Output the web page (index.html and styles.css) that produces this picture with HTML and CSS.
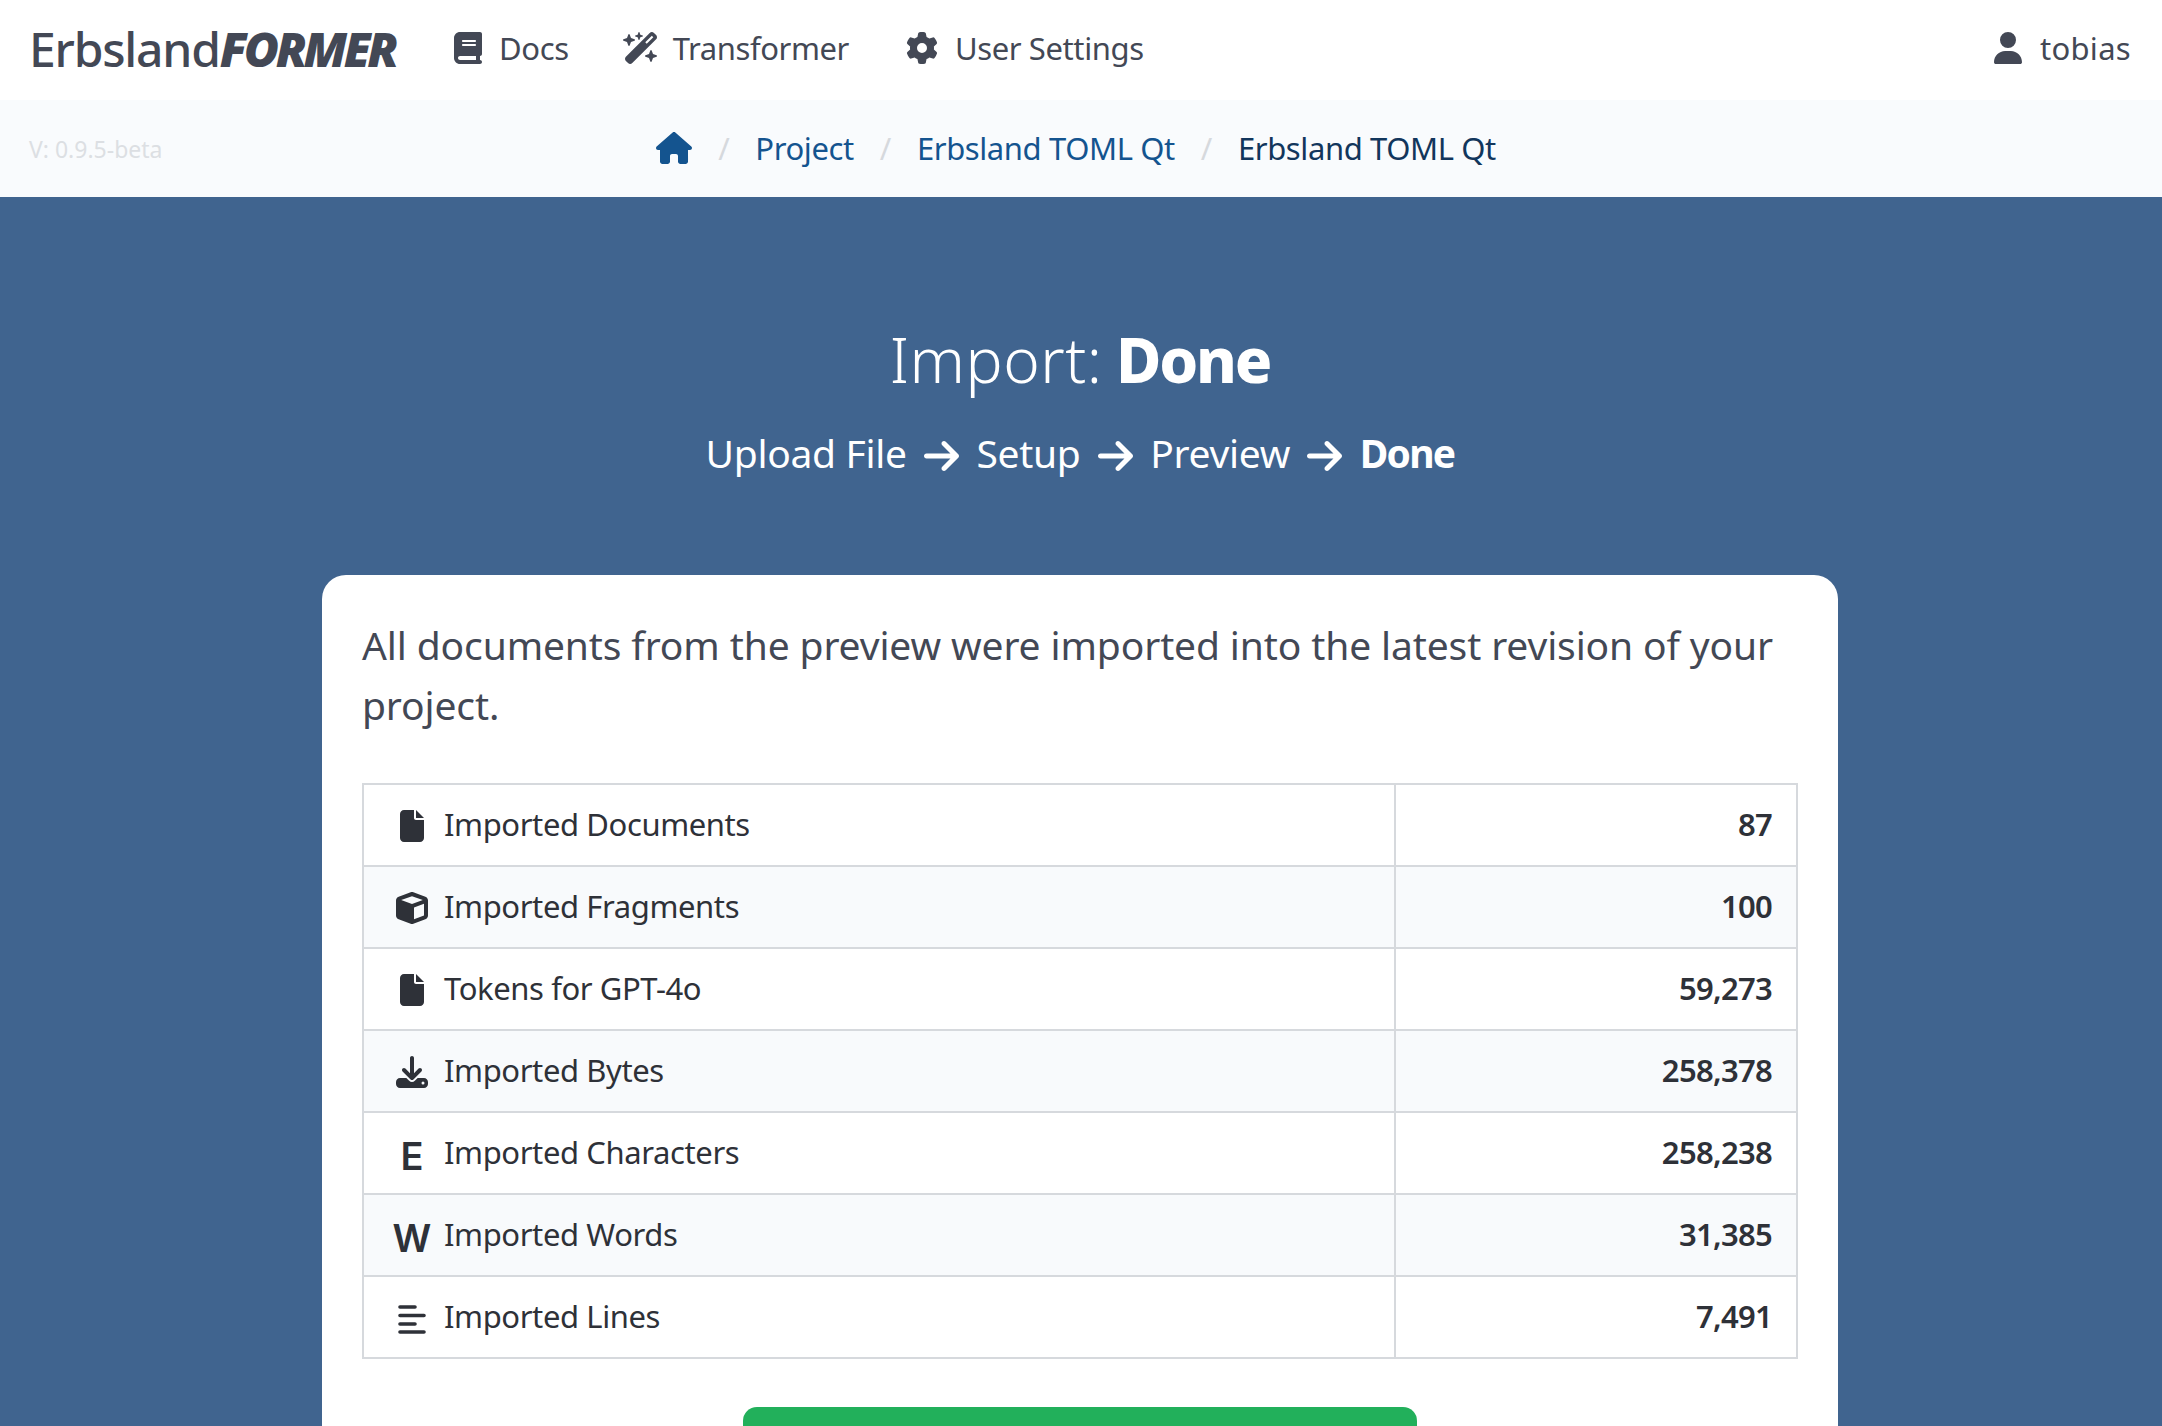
FILE: index.html
```html
<!DOCTYPE html>
<html lang="en">
<head>
  <meta charset="UTF-8" />
  <meta name="viewport" content="width=device-width, initial-scale=1.0" />
  <title>ErbslandFORMER</title>
  <link rel="stylesheet" href="styles.css">
</head>
<body>

  <header class="topbar">
    <a class="logo" href="#">Erbsland<b>FORMER</b></a>
    <nav class="topnav">
      <a href="#">
        <svg class="ico" viewBox="0 0 448 512"><path d="M96 0C43 0 0 43 0 96V416c0 53 43 96 96 96H384h32c17.7 0 32-14.3 32-32s-14.3-32-32-32V384c17.7 0 32-14.3 32-32V32c0-17.7-14.3-32-32-32H384 96zm0 384H352v64H96c-17.7 0-32-14.3-32-32s14.3-32 32-32zm32-240c0-8.8 7.2-16 16-16H336c8.8 0 16 7.2 16 16s-7.2 16-16 16H144c-8.8 0-16-7.2-16-16zm16 48H336c8.8 0 16 7.2 16 16s-7.2 16-16 16H144c-8.8 0-16-7.2-16-16s7.2-16 16-16z"/></svg>
        Docs
      </a>
      <a href="#" class="tf">
        <svg class="ico" viewBox="0 0 576 512"><path d="M234.7 42.7L197 56.8c-3 1.1-5 4-5 7.2s2 6.1 5 7.2l37.7 14.1L248.8 123c1.1 3 4 5 7.2 5s6.1-2 7.2-5l14.1-37.7L315 71.2c3-1.1 5-4 5-7.2s-2-6.1-5-7.2L277.3 42.7 263.2 5c-1.1-3-4-5-7.2-5s-6.1 2-7.2 5L234.7 42.7zM46.1 395.4c-18.7 18.7-18.7 49.1 0 67.9l34.6 34.6c18.7 18.7 49.1 18.7 67.9 0L529.9 116.5c18.7-18.7 18.7-49.1 0-67.9L495.3 14.1c-18.7-18.7-49.1-18.7-67.9 0L46.1 395.4zM484.6 82.6l-105 105-23.3-23.3 105-105 23.3 23.3zM7.5 117.2C3 118.9 0 123.2 0 128s3 9.1 7.5 10.8L64 160l21.2 56.5c1.7 4.5 6 7.5 10.8 7.5s9.1-3 10.8-7.5L128 160l56.5-21.2c4.5-1.7 7.5-6 7.5-10.8s-3-9.1-7.5-10.8L128 96 106.8 39.5C105.1 35 100.8 32 96 32s-9.1 3-10.8 7.5L64 96 7.5 117.2zm352 256c-4.5 1.7-7.5 6-7.5 10.8s3 9.1 7.5 10.8L416 416l21.2 56.5c1.7 4.5 6 7.5 10.8 7.5s9.1-3 10.8-7.5L480 416l56.5-21.2c4.5-1.7 7.5-6 7.5-10.8s-3-9.1-7.5-10.8L480 352l-21.2-56.5c-1.7-4.5-6-7.5-10.8-7.5s-9.1 3-10.8 7.5L416 352l-56.5 21.2z"/></svg>
        Transformer
      </a>
      <a href="#">
        <svg class="ico" viewBox="0 0 512 512"><path d="M495.9 166.6c3.2 8.7 .5 18.4-6.4 24.6l-43.3 39.4c1.1 8.3 1.7 16.8 1.7 25.4s-.6 17.1-1.7 25.4l43.3 39.4c6.9 6.2 9.6 15.9 6.4 24.6c-4.4 11.9-9.7 23.3-15.8 34.3l-4.7 8.1c-6.6 11-14 21.4-22.1 31.2c-5.9 7.2-15.7 9.6-24.5 6.8l-55.7-17.7c-13.4 10.3-28.2 18.9-44 25.4l-12.5 57.1c-2 9.1-9 16.3-18.2 17.8c-13.8 2.3-28 3.5-42.5 3.5s-28.7-1.2-42.5-3.5c-9.2-1.5-16.2-8.7-18.2-17.8l-12.5-57.1c-15.8-6.5-30.6-15.1-44-25.4L83.1 425.9c-8.8 2.8-18.6 .3-24.5-6.8c-8.1-9.8-15.5-20.2-22.1-31.2l-4.7-8.1c-6.1-11-11.4-22.4-15.8-34.3c-3.2-8.7-.5-18.4 6.4-24.6l43.3-39.4C64.6 273.1 64 264.6 64 256s.6-17.1 1.7-25.4L22.4 191.2c-6.9-6.2-9.6-15.9-6.4-24.6c4.4-11.9 9.7-23.3 15.8-34.3l4.7-8.1c6.6-11 14-21.4 22.1-31.2c5.9-7.2 15.7-9.6 24.5-6.8l55.7 17.7c13.4-10.3 28.2-18.9 44-25.4l12.5-57.1c2-9.1 9-16.3 18.2-17.8C227.3 1.2 241.5 0 256 0s28.7 1.2 42.5 3.5c9.2 1.5 16.2 8.7 18.2 17.8l12.5 57.1c15.8 6.5 30.6 15.1 44 25.4l55.7-17.7c8.8-2.8 18.6-.3 24.5 6.8c8.1 9.8 15.5 20.2 22.1 31.2l4.7 8.1c6.1 11 11.4 22.4 15.8 34.3zM256 336a80 80 0 1 0 0-160 80 80 0 1 0 0 160z"/></svg>
        User Settings
      </a>
    </nav>
    <a class="user" href="#">
      <svg class="ico" viewBox="0 0 448 512"><path d="M224 256A128 128 0 1 0 224 0a128 128 0 1 0 0 256zm-45.7 48C79.8 304 0 383.8 0 482.3C0 498.7 13.3 512 29.7 512H418.3c16.4 0 29.7-13.3 29.7-29.7C448 383.8 368.2 304 269.7 304H178.3z"/></svg>
      tobias
    </a>
  </header>

  <div class="crumbbar">
    <span class="version">V: 0.9.5-beta</span>
    <nav class="crumbs">
      <a href="#" class="home"><svg viewBox="0 0 576 512"><path d="M575.8 255.5c0 18-15 32.1-32 32.1h-32l.7 160.2c0 2.7-.2 5.4-.5 8.1V472c0 22.1-17.9 40-40 40H456c-1.1 0-2.2 0-3.3-.1c-1.4 .1-2.8 .1-4.2 .1H416 392c-22.1 0-40-17.9-40-40V448 384c0-17.7-14.3-32-32-32H256c-17.7 0-32 14.3-32 32v64 24c0 22.1-17.9 40-40 40H160 128.1c-1.5 0-3-.1-4.5-.2c-1.2 .1-2.4 .2-3.6 .2H104c-22.1 0-40-17.9-40-40V360c0-.9 0-1.9 .1-2.8V287.6H32c-18 0-32-14-32-32.1c0-9 3-17 10-24L266.4 8c7-7 15-8 22-8s15 2 21 7L564.8 231.5c8 7 12 15 11 24z"/></svg></a>
      <span class="sep">/</span>
      <a href="#">Project</a>
      <span class="sep">/</span>
      <a href="#">Erbsland TOML Qt</a>
      <span class="sep">/</span>
      <span class="current">Erbsland TOML Qt</span>
    </nav>
  </div>

  <main class="hero">
    <h1>Import: <b>Done</b></h1>
    <p class="steps">Upload File <svg class="arr" viewBox="0 0 448 512"><path d="M438.6 278.6c12.5-12.5 12.5-32.8 0-45.3l-160-160c-12.5-12.5-32.8-12.5-45.3 0s-12.5 32.8 0 45.3L338.8 224 32 224c-17.7 0-32 14.3-32 32s14.3 32 32 32l306.7 0L233.4 393.4c-12.5 12.5-12.5 32.8 0 45.3s32.8 12.5 45.3 0l160-160z"/></svg> Setup <svg class="arr" viewBox="0 0 448 512"><path d="M438.6 278.6c12.5-12.5 12.5-32.8 0-45.3l-160-160c-12.5-12.5-32.8-12.5-45.3 0s-12.5 32.8 0 45.3L338.8 224 32 224c-17.7 0-32 14.3-32 32s14.3 32 32 32l306.7 0L233.4 393.4c-12.5 12.5-12.5 32.8 0 45.3s32.8 12.5 45.3 0l160-160z"/></svg> Preview <svg class="arr" viewBox="0 0 448 512"><path d="M438.6 278.6c12.5-12.5 12.5-32.8 0-45.3l-160-160c-12.5-12.5-32.8-12.5-45.3 0s-12.5 32.8 0 45.3L338.8 224 32 224c-17.7 0-32 14.3-32 32s14.3 32 32 32l306.7 0L233.4 393.4c-12.5 12.5-12.5 32.8 0 45.3s32.8 12.5 45.3 0l160-160z"/></svg> <b>Done</b></p>

    <section class="card">
      <p class="lead">All documents from the preview were imported into the latest revision of your project.</p>

      <table class="stats">
        <tr>
          <td><span class="cell-ico"><svg viewBox="0 0 384 512"><path d="M0 64C0 28.7 28.7 0 64 0H224V128c0 17.7 14.3 32 32 32H384V448c0 35.3-28.7 64-64 64H64c-35.3 0-64-28.7-64-64V64zm384 64H256V0L384 128z"/></svg></span>Imported Documents</td>
          <td>87</td>
        </tr>
        <tr>
          <td><span class="cell-ico"><svg viewBox="0 0 512 512"><path d="M234.5 5.7c13.9-5 29.1-5 43.1 0l192 68.6C495 83.4 512 107.5 512 134.6V377.4c0 27-17 51.2-42.5 60.3l-192 68.6c-13.9 5-29.1 5-43.1 0l-192-68.6C17 428.6 0 404.5 0 377.4V134.6c0-27 17-51.2 42.5-60.3l192-68.6zM256 66L82.3 128 256 190l173.7-62L256 66zm32 368.6l160-57.1v-188L288 246.6v188z"/></svg></span>Imported Fragments</td>
          <td>100</td>
        </tr>
        <tr>
          <td><span class="cell-ico"><svg viewBox="0 0 384 512"><path d="M0 64C0 28.7 28.7 0 64 0H224V128c0 17.7 14.3 32 32 32H384V448c0 35.3-28.7 64-64 64H64c-35.3 0-64-28.7-64-64V64zm384 64H256V0L384 128z"/></svg></span>Tokens for GPT-4o</td>
          <td>59,273</td>
        </tr>
        <tr>
          <td><span class="cell-ico"><svg viewBox="0 0 512 512"><path d="M288 32c0-17.7-14.3-32-32-32s-32 14.3-32 32V274.7l-73.4-73.4c-12.5-12.5-32.8-12.5-45.3 0s-12.5 32.8 0 45.3l128 128c12.5 12.5 32.8 12.5 45.3 0l128-128c12.5-12.5 12.5-32.8 0-45.3s-32.8-12.5-45.3 0L288 274.7V32zM64 352c-35.3 0-64 28.7-64 64v32c0 35.3 28.7 64 64 64H448c35.3 0 64-28.7 64-64V416c0-35.3-28.7-64-64-64H346.5l-45.3 45.3c-25 25-65.5 25-90.5 0L165.5 352H64zm368 56a24 24 0 1 1 0 48 24 24 0 1 1 0-48z"/></svg></span>Imported Bytes</td>
          <td>258,378</td>
        </tr>
        <tr>
          <td><span class="cell-ico letter">E</span>Imported Characters</td>
          <td>258,238</td>
        </tr>
        <tr>
          <td><span class="cell-ico letter">W</span>Imported Words</td>
          <td>31,385</td>
        </tr>
        <tr>
          <td><span class="cell-ico"><svg viewBox="0 0 28 29" class="lines"><path d="M2 2H17M2 10.5H26M2 19H17M2 27H26"/></svg></span>Imported Lines</td>
          <td>7,491</td>
        </tr>
      </table>

      <a href="#" class="btn-green" aria-label="Continue"></a>
    </section>
  </main>

</body>
</html>
```

FILE: styles.css
```css
* { margin: 0; padding: 0; box-sizing: border-box; }
html, body { height: 100vh; overflow: hidden; }
body { font-family: 'Noto Sans', sans-serif; font-size: 31px; letter-spacing: -0.4px; background: #40648f; color: #363a45; }
a { color: inherit; text-decoration: none; }
b { font-weight: 700; }

.topbar {
  height: 100px;
  background: #fff;
  color: #434855;
  display: flex;
  align-items: center;
  padding: 0 31px 4px 29px;
}

.logo {
  font-size: 48px;
  font-weight: 500;
  letter-spacing: -1.2px;
  margin-right: 59px;
}
.logo b { font-style: italic; font-weight: 900; letter-spacing: -3.4px; }

.topnav { display: flex; gap: 54px; flex: 1; }
.topnav a, .user { display: flex; align-items: center; gap: 17px; }
.ico { height: 32px; width: auto; fill: #434855; }
.tf { padding-right: 3px; }
.tf .ico { margin-right: -3px; }
.user { letter-spacing: 0.3px; gap: 18px; }

.crumbbar {
  height: 97px;
  padding-bottom: 2px;
  background: #f9fbfd;
  display: flex;
  align-items: center;
  justify-content: center;
  position: relative;
}
.version {
  position: absolute;
  left: 29px;
  margin-top: 2px;
  font-size: 23px;
  letter-spacing: 0;
  color: #dcdfe3;
}
.crumbs { display: flex; align-items: center; gap: 26px; color: #14548f; margin-right: 10px; }
.home svg { display: block; width: 36px; height: 32px; fill: #14548f; }
.sep { color: #d6d9dd; }
.current { color: #12365c; }

.hero { text-align: center; color: #fff; padding: 131px 2px 0 0; }
.hero h1 { font-size: 62px; font-weight: 300; line-height: 1; letter-spacing: 0.5px; word-spacing: -3px; margin-bottom: 33px; }
.hero h1 b { font-weight: 800; letter-spacing: -2.2px; }
.steps { font-size: 39px; letter-spacing: -0.3px; line-height: 60px; margin-bottom: 92px; }
.steps b { letter-spacing: -1.7px; }
.arr { width: 35px; height: 40px; fill: #fff; vertical-align: -8px; margin: 0 7.5px; }

.card {
  width: 1516px;
  margin: 0 auto;
  background: #fff;
  border-radius: 24px;
  padding: 40px;
  text-align: left;
  color: #434855;
}
.lead { font-size: 39px; letter-spacing: -0.12px; line-height: 60px; margin-bottom: 48px; }

.stats { width: 100%; border-collapse: collapse; color: #2e3138; }
.stats td {
  height: 82px;
  border: 2px solid #d6d9dd;
  padding: 0 24px 3px;
}
.stats td:first-child { width: 1032px; }
.stats td:last-child { text-align: right; font-weight: 600; letter-spacing: -0.7px; }
.stats tr:nth-child(even) { background: #f8fafc; }

.cell-ico {
  display: inline-flex;
  width: 48px;
  height: 32px;
  margin-right: 8px;
  align-items: center;
  justify-content: center;
  vertical-align: -6px;
}
.cell-ico svg { height: 32px; width: auto; fill: #2e3138; }
.cell-ico svg.lines { width: 28px; height: 29px; fill: none; stroke: #2e3138; stroke-width: 3.6; stroke-linecap: round; }
.letter { font-family: 'Inter', sans-serif; font-weight: 600; font-size: 38px; line-height: 32px; letter-spacing: 0; }

.btn-green {
  display: block;
  width: 674px;
  height: 80px;
  margin: 48px auto 0;
  background: #22b05b;
  border-radius: 14px;
}
```
